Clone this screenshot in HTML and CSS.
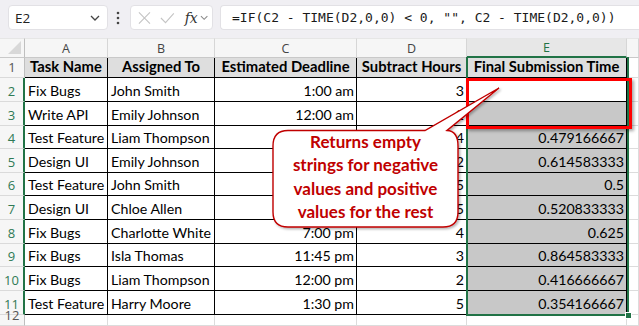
FILE: index.html
```html
<!DOCTYPE html>
<html>
<head>
<meta charset="utf-8">
<link rel="stylesheet" href="styles.css">
</head>
<body>
<div class="app">
  <div class="toolbar">
    <div class="namebox">
      <span class="name">E2</span>
      <svg class="chev" width="12" height="8" viewBox="0 0 12 8"><path d="M2 2 L6 6 L10 2" fill="none" stroke="#444" stroke-width="1.3"/></svg>
    </div>
    <svg class="vdots" width="6" height="16" viewBox="0 0 6 16"><circle cx="3" cy="3" r="1.3" fill="#444"/><circle cx="3" cy="8" r="1.3" fill="#444"/><circle cx="3" cy="13" r="1.3" fill="#444"/></svg>
    <div class="funcbox">
      <svg width="14" height="14" viewBox="0 0 14 14"><path d="M1 1 L13 13 M13 1 L1 13" stroke="#c4c4c4" stroke-width="1.2"/></svg>
      <svg width="16" height="12" viewBox="0 0 16 12"><path d="M1 6 L6 11 L15 1" fill="none" stroke="#c4c4c4" stroke-width="1.2"/></svg>
      <span class="fx">fx</span>
      <svg width="9" height="6" viewBox="0 0 9 6"><path d="M1 1 L4.5 4.5 L8 1" fill="none" stroke="#888" stroke-width="1.1"/></svg>
    </div>
    <div class="formula">=IF(C2 - TIME(D2,0,0) &lt; 0, "", C2 - TIME(D2,0,0))</div>
  </div>

  <div class="sheet">
    <div class="ch corner"><span class="tri"></span></div>
    <div class="ch">A</div><div class="ch">B</div><div class="ch">C</div><div class="ch">D</div><div class="ch sel">E</div><div class="ch"></div>

    <div class="rh">1</div>
    <div class="c hd">Task Name</div><div class="c hd">Assigned To</div><div class="c hd">Estimated Deadline</div><div class="c hd">Subtract Hours</div><div class="c hd">Final Submission Time</div><div class="g"></div>

    <div class="rh s">2</div>
    <div class="c">Fix Bugs</div><div class="c">John Smith</div><div class="c r">1:00 am</div><div class="c r">3</div><div class="c r e act"></div><div class="g"></div>

    <div class="rh s">3</div>
    <div class="c">Write API</div><div class="c">Emily Johnson</div><div class="c r">12:00 am</div><div class="c r">2</div><div class="c r e"></div><div class="g"></div>

    <div class="rh s">4</div>
    <div class="c">Test Feature</div><div class="c">Liam Thompson</div><div class="c r">3:30 pm</div><div class="c r">4</div><div class="c r e">0.479166667</div><div class="g"></div>

    <div class="rh s">5</div>
    <div class="c">Design UI</div><div class="c">Emily Johnson</div><div class="c r">4:45 pm</div><div class="c r">2</div><div class="c r e">0.614583333</div><div class="g"></div>

    <div class="rh s">6</div>
    <div class="c">Test Feature</div><div class="c">John Smith</div><div class="c r">5:00 pm</div><div class="c r">5</div><div class="c r e">0.5</div><div class="g"></div>

    <div class="rh s">7</div>
    <div class="c">Design UI</div><div class="c">Chloe Allen</div><div class="c r">5:30 pm</div><div class="c r">5</div><div class="c r e">0.520833333</div><div class="g"></div>

    <div class="rh s">8</div>
    <div class="c">Fix Bugs</div><div class="c">Charlotte White</div><div class="c r">7:00 pm</div><div class="c r">4</div><div class="c r e">0.625</div><div class="g"></div>

    <div class="rh s">9</div>
    <div class="c">Fix Bugs</div><div class="c">Isla Thomas</div><div class="c r">11:45 pm</div><div class="c r">3</div><div class="c r e">0.864583333</div><div class="g"></div>

    <div class="rh s">10</div>
    <div class="c">Fix Bugs</div><div class="c">Liam Thompson</div><div class="c r">12:00 pm</div><div class="c r">2</div><div class="c r e">0.416666667</div><div class="g"></div>

    <div class="rh s">11</div>
    <div class="c">Test Feature</div><div class="c">Harry Moore</div><div class="c r">1:30 pm</div><div class="c r">5</div><div class="c r e">0.354166667</div><div class="g"></div>

    <div class="rh">12</div>
    <div class="g"></div><div class="g"></div><div class="g"></div><div class="g"></div><div class="g"></div><div class="g"></div>

    <div class="selbox"><span class="handle"></span></div>
    <div class="redbox"></div>
    <svg class="bubble" width="639" height="326" viewBox="0 0 639 326">
      <defs>
        <filter id="sh" x="-10%" y="-10%" width="130%" height="130%">
          <feDropShadow dx="1.5" dy="1.5" stdDeviation="1.2" flood-color="#000" flood-opacity="0.3"/>
        </filter>
      </defs>
      <path d="M288 130.5 H425 L499 88 L447 130.5 Q458 131 458 146 V212 Q458 227 443 227 H288 Q273 227 273 212 V146 Q273 130.5 288 130.5 Z" fill="#fff" stroke="#c00000" stroke-width="1.4" filter="url(#sh)"/>
    </svg>
    <div class="callout">Returns empty<br>strings for negative<br>values and positive<br>values for the rest</div>
  </div>
</div>
</body>
</html>
```

FILE: styles.css
```css
* { box-sizing: border-box; }
html, body { margin: 0; padding: 0; background: #fff; }
.app { width: 639px; height: 326px; overflow: hidden; position: relative; }

.toolbar {
  height: 38px;
  background: #f0eff3;
  display: flex;
  align-items: flex-start;
  padding: 5px 0 0 8px;
}
.namebox {
  width: 100px; height: 25px;
  background: #fff;
  border: 1px solid #e2e1e5;
  border-radius: 4px;
  display: flex; align-items: center; justify-content: space-between;
  padding: 0 6px 0 6px;
  font-family: "Open Sans", sans-serif; font-size: 13.5px; color: #222;
}
.vdots { margin: 5px 0 0 7px; }
.funcbox {
  margin-left: 9px;
  width: 83px; height: 25px;
  background: #fff;
  border: 1px solid #e2e1e5;
  border-radius: 4px;
  display: flex; align-items: center;
  padding: 0 4px 0 7px;
  gap: 8px;
}
.funcbox svg:first-child { margin-right: 1px; }
.fx { font-family: "DejaVu Serif", serif; font-style: italic; font-size: 14px; color: #333; margin-left: 2px; margin-right: -6px; }
.formula {
  margin-left: 7px;
  flex: 1; height: 25px;
  background: #fff;
  border: 1px solid #e2e1e5; border-right: none;
  border-radius: 4px 0 0 4px;
  padding-left: 11px;
  font-family: "DejaVu Sans Mono", monospace; font-size: 13px; line-height: 23px; color: #1a1a1a;
  white-space: nowrap;
}

.sheet {
  position: relative;
  display: grid;
  grid-template-columns: 25px 83px 107px 142px 110px 160px 12px;
  grid-template-rows: 20px 20px 24px 24px 23px 24px 23px 24px 24px 23px 24px 24px 11px;
  font-family: Lato, "Liberation Sans", sans-serif; font-size: 14.2px; color: #000;
}
.ch {
  background: #f6f6f6;
  border-top: 1px solid #e6e6e6;
  border-right: 1px solid #d6d6d6;
  border-bottom: 1px solid #c9c9c9;
  display: flex; align-items: center; justify-content: center;
  font-family: "Open Sans", sans-serif; font-size: 12.5px; color: #444;
}
.ch.corner { position: relative; border-right: 1px solid #bfbfbf; }
.tri {
  position: absolute; right: 3px; bottom: 3px;
  width: 0; height: 0;
  border-left: 13px solid transparent;
  border-bottom: 13px solid #d8d8d8;
}
.ch.sel { background: #e7e7e7; color: #217346; border-bottom: 2px solid #217346; }

.rh {
  background: #f6f6f6;
  border-right: 1px solid #bfbfbf;
  border-bottom: 1px solid #dadada;
  display: flex; align-items: flex-end; justify-content: center;
  padding-bottom: 1px;
  font-family: "Open Sans", sans-serif; font-size: 13px; color: #555;
}
.rh.s { color: #2f7a55; border-right: 2px solid #217346; }

.c {
  border-right: 1px solid #000;
  border-bottom: 1px solid #000;
  display: flex; align-items: flex-end;
  padding: 0 2px 2px 3px;
  white-space: nowrap; overflow: hidden;
}
.c.hd { background: #dedede; font-weight: 700; font-size: 14.8px; justify-content: center; padding-left: 2px; }
.c.r { justify-content: flex-end; }
.c.e { background: #c8c8c8; }
.c.e.act { background: #fff; }
.g { border-right: 1px solid #dcdcdc; border-bottom: 1px solid #dcdcdc; }

.selbox {
  position: absolute;
  left: 466px; top: 19px; width: 163px; height: 259px;
  border: 2px solid #217346;
  border-top: none;
  pointer-events: none;
}
.handle {
  position: absolute; right: -5px; bottom: -5px;
  width: 7px; height: 7px;
  background: #217346;
  border: 1px solid #fff;
}
.redbox {
  position: absolute;
  left: 466px; top: 40px; width: 166px; height: 51px;
  border: 3px solid #ff0000;
  box-shadow: 2px 2px 3px rgba(0,0,0,0.35);
}
.bubble { position: absolute; left: 0; top: -38px; }
.callout {
  position: absolute;
  left: 273px; top: 90px; width: 185px; height: 97px;
  display: flex; align-items: center; justify-content: center;
  text-align: center; white-space: nowrap;
  font-family: Lato, sans-serif; font-weight: 700; font-size: 17px; line-height: 23.5px;
  color: #c00000;
}
```
